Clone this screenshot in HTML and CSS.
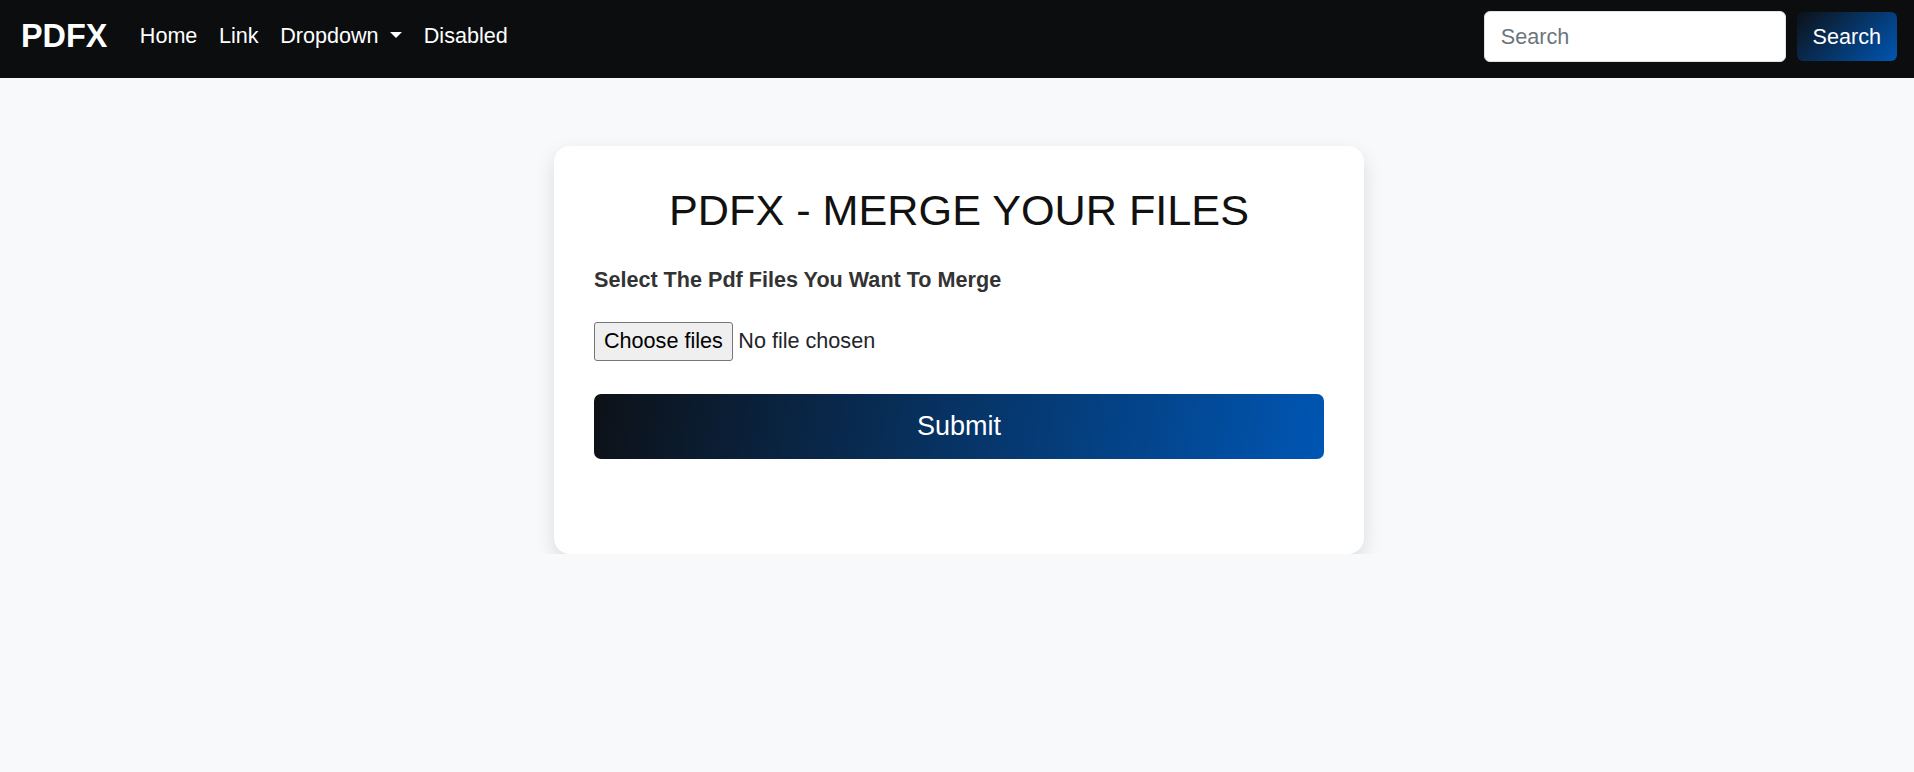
FILE: index.html
```html
<!DOCTYPE html>
<html lang="en">
<head>
<meta charset="utf-8">
<title>PDFX - Merge your files</title>
<link rel="stylesheet" href="styles.css">
</head>
<body>
<nav class="navbar">
  <div class="nav-left">
    <a class="brand" href="#">PDFX</a>
    <ul class="nav-links">
      <li><a class="nav-link" href="#">Home</a></li>
      <li><a class="nav-link" href="#">Link</a></li>
      <li><a class="nav-link dropdown-toggle" href="#">Dropdown <span class="caret"></span></a></li>
      <li><a class="nav-link" href="#">Disabled</a></li>
    </ul>
  </div>
  <form class="search-form">
    <input class="search-input" type="search" placeholder="Search">
    <button class="search-btn" type="button">Search</button>
  </form>
</nav>

<main class="main">
  <div class="card">
    <h2 class="card-title">PDFX - MERGE YOUR FILES</h2>
    <form class="merge-form">
      <label class="form-label">Select The Pdf Files You Want To Merge</label>
      <div class="file-row">
        <span class="file-btn">Choose files</span>
        <span class="file-status">No file chosen</span>
      </div>
      <button class="submit-btn" type="button">Submit</button>
    </form>
  </div>
</main>
</body>
</html>
```

FILE: styles.css
```css
* {
  box-sizing: border-box;
}

body {
  margin: 0;
  background: #f8f9fa;
  font-family: "Liberation Sans", Arial, sans-serif;
  font-size: 21.6px;
  color: #212529;
}

.navbar {
  display: flex;
  align-items: center;
  justify-content: space-between;
  background: #0b0d0e;
  padding: 11px 17px 16px 21px;
}

.nav-left {
  display: flex;
  align-items: center;
}

.brand {
  color: #fff;
  text-decoration: none;
  font-weight: 700;
  font-size: 32.4px;
  line-height: 1.15;
  margin-right: 21.6px;
}

.nav-links {
  display: flex;
  list-style: none;
  margin: 0;
  padding: 0;
}

.nav-link {
  display: block;
  color: #fff;
  text-decoration: none;
  padding: 0 10.8px;
  line-height: 1.5;
}

.caret {
  display: inline-block;
  margin-left: 0.255em;
  vertical-align: 0.255em;
  border-top: 0.3em solid #fff;
  border-left: 0.3em solid transparent;
  border-right: 0.3em solid transparent;
}

.search-form {
  display: flex;
  align-items: center;
  gap: 11px;
  margin: 0;
}

.search-input {
  width: 302px;
  height: 51px;
  border: 1px solid #dee2e6;
  border-radius: 6px;
  padding: 0 16.2px;
  font-family: inherit;
  font-size: 21.6px;
  color: #212529;
  background: #fff;
  outline: none;
}

.search-input::placeholder {
  color: #6c757d;
}

.search-btn {
  height: 48.6px;
  padding: 0 16px;
  border: none;
  border-radius: 6px;
  background: linear-gradient(135deg, #0d1117, #0056b3);
  color: #fff;
  font-family: inherit;
  font-size: 21.6px;
}

.main {
  display: flex;
  justify-content: center;
  padding: 68px 0 0 4px;
}

.card {
  width: 810px;
  background: #fff;
  border-radius: 16px;
  padding: 39px 40px 40px;
  box-shadow: 0 8px 20px rgba(0, 0, 0, 0.12);
}

.card-title {
  margin: 0 0 27px;
  text-align: center;
  font-weight: 400;
  font-size: 43.2px;
  line-height: 1.2;
  color: #111;
}

.merge-form {
  margin-bottom: 55px;
}

.form-label {
  display: block;
  font-weight: 700;
  line-height: 1.5;
  color: #333;
  margin-bottom: 26px;
}

.file-row {
  display: flex;
  align-items: center;
  margin-bottom: 33px;
}

.file-btn {
  display: block;
  height: 38.5px;
  line-height: 36.5px;
  padding: 0 9px;
  background: #efefef;
  border: 1px solid #767676;
  border-radius: 3px;
  color: #000;
}

.file-status {
  margin-left: 5.5px;
  color: #212529;
}

.submit-btn {
  display: block;
  width: 100%;
  height: 65px;
  border: none;
  border-radius: 7px;
  background: linear-gradient(100deg, #0d1117 0%, #0056b3 100%);
  color: #fff;
  font-family: inherit;
  font-size: 27px;
}
```
